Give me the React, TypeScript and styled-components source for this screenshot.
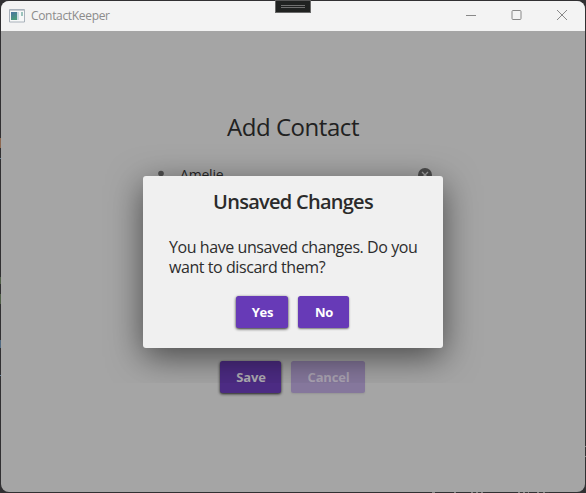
import React from "react";
import styled, { createGlobalStyle } from "styled-components";

const GlobalStyle = createGlobalStyle`
  * { box-sizing: border-box; }
  html, body { margin: 0; height: 100%; background: #3a383b; }
  body { font-family: "Open Sans", "Noto Sans", sans-serif; overflow: hidden; }
`;

const Desktop = styled.div`
  position: relative;
  width: 586px;
  height: 493px;
  padding: 1px;
  background:
    linear-gradient(#b48262, #b48262) 0 138px / 1px 10px no-repeat,
    linear-gradient(#7fa6c6, #7fa6c6) 0 158px / 1px 1px no-repeat,
    linear-gradient(#64785a, #64785a) 0 277px / 1px 7px no-repeat,
    linear-gradient(#64785a, #64785a) 0 294px / 1px 10px no-repeat,
    linear-gradient(#6285a5, #6285a5) 0 340px / 1px 8px no-repeat,
    linear-gradient(#7fa6c6, #7fa6c6) 0 375px / 1px 1px no-repeat,
    linear-gradient(#aaa, #aaa) 585px 446px / 1px 1px no-repeat,
    linear-gradient(#aaa, #aaa) 585px 456px / 1px 1px no-repeat,
    repeating-linear-gradient(90deg, #aaa 0 2px, #444 2px 5px) 471px 492px / 12px 1px no-repeat,
    repeating-linear-gradient(90deg, #aaa 0 2px, #444 2px 5px) 518px 492px / 11px 1px no-repeat,
    repeating-linear-gradient(90deg, #aaa 0 2px, #444 2px 6px) 537px 492px / 12px 1px no-repeat,
    linear-gradient(#aaa, #aaa) 432px 492px / 3px 1px no-repeat,
    linear-gradient(#aaa, #aaa) 454px 492px / 2px 1px no-repeat,
    #3a383b;
`;

const Window = styled.div`
  display: flex;
  flex-direction: column;
  height: 491px;
  width: 584px;
  overflow: hidden;
  border-radius: 8px;
  background: #a5a5a5;
  box-shadow: 0 0 0 4px rgba(24, 22, 25, 0.25);
`;

const TitleBar = styled.header`
  display: flex;
  align-items: center;
  flex: none;
  height: 30px;
  padding-left: 8px;
  background: #f3f3f3;
  color: #8b8b8b;
`;

const AppTitle = styled.span`
  flex: 1;
  margin-left: 6px;
  font-size: 12px;
  line-height: 16px;
  letter-spacing: -0.33px;
`;

const CaptionButton = styled.span`
  display: flex;
  justify-content: center;
  width: 45.5px;
`;

const DebugTab = styled.div`
  position: absolute;
  left: 275px;
  top: 0;
  width: 36px;
  height: 13px;
  display: flex;
  flex-direction: column;
  align-items: center;
  gap: 1px;
  padding-top: 4px;
  border: 1px solid #696969;
  border-top-color: #555;
  background: #202221;
`;

const DebugLine = styled.i`
  width: 24px;
  height: 1px;
  background: #707070;
`;

const Client = styled.main`
  position: relative;
  flex: 1;
  display: flex;
  flex-direction: column;
  align-items: center;
`;

const PageTitle = styled.h1`
  margin: 79px 0 0;
  font-size: 24px;
  line-height: 34px;
  font-weight: 400;
  letter-spacing: -0.45px;
  color: #212121;
`;

const Field = styled.div`
  display: flex;
  align-items: center;
  width: 284px;
  height: 24px;
  margin-top: 19px;
  padding: 0 3px 0 2px;
  font-size: 14px;
  color: #272727;
`;

const FieldValue = styled.span`
  flex: 1;
  margin-left: 11px;
  padding-bottom: 2px;
  letter-spacing: -0.2px;
`;

const Actions = styled.div<{ $top: number }>`
  display: flex;
  gap: 10px;
  margin-top: ${(p) => p.$top}px;
  margin-right: 2px;
`;

const Button = styled.button<{ $width: number; $tone?: "raised" | "dim" | "disabled" }>`
  width: ${(p) => p.$width}px;
  height: 32px;
  padding: 0 0 1px 2px;
  border: 0;
  border-radius: 2.5px;
  font: 700 13px/18px "Open Sans", "Noto Sans", sans-serif;
  letter-spacing: -0.2px;
  color: ${(p) => (p.$tone === "dim" ? "#aeabb2" : p.$tone === "disabled" ? "#aaa3b2" : "#fff")};
  background: ${(p) => (p.$tone === "dim" ? "#4c2b83" : p.$tone === "disabled" ? "#85779c" : "#673ab7")};
  box-shadow: ${(p) =>
    p.$tone === "disabled"
      ? "0 1px 2px rgba(0,0,0,.1)"
      : p.$tone
        ? "0 1px 3px rgba(0,0,0,.85)"
        : "0 1px 2px rgba(0,0,0,.5)"};
`;

const DialogLayer = styled.div`
  position: absolute;
  inset: 0;
  display: flex;
  justify-content: center;
  align-items: flex-start;
  padding-top: 145px;
`;

const Dialog = styled.section`
  display: flex;
  flex-direction: column;
  align-items: center;
  width: 300px;
  height: 172px;
  border-radius: 3px;
  background: #f0f0f0;
  box-shadow: 0 9px 34px rgba(0, 0, 0, 0.56);
  clip-path: inset(-60px -60px -35px -60px);
`;

const DialogTitle = styled.h2`
  margin: 12px 0 0;
  font-size: 20px;
  line-height: 28px;
  font-weight: 600;
  letter-spacing: -0.73px;
  color: #2b2b2b;
`;

const Message = styled.p`
  width: 260px;
  margin: 21px 0 0 12px;
  font-size: 16px;
  line-height: 20px;
  letter-spacing: -0.43px;
  color: #2d2d2d;
  white-space: nowrap;
`;

export default function App() {
  return (
    <Desktop>
      <GlobalStyle />
      <Window>
        <TitleBar>
          <svg width="16" height="14" viewBox="0 0 16 14">
            <defs>
              <linearGradient id="pane" x2=".4" y2="1">
                <stop stopColor="#4974a2" />
                <stop offset="1" stopColor="#4b9a7c" />
              </linearGradient>
            </defs>
            <path d="M.5 .5h15v12.5H.5z" fill="#f7f8f8" stroke="#a9b2bb" />
            <path d="M1 1.5h14" stroke="#c5cbd1" />
            <path d="M2 3h6v8H2z" fill="url(#pane)" />
            <path d="M8 3h2v8H8z" fill="#cbdbe2" />
            <path d="M12 3h2v4h-2z" fill="#9cc4bd" />
          </svg>
          <AppTitle>ContactKeeper</AppTitle>
          <CaptionButton>
            <svg width="12" height="12" fill="none" stroke="#888"><path d="M1 5.5h10" /></svg>
          </CaptionButton>
          <CaptionButton>
            <svg width="12" height="12" fill="none" stroke="#888"><rect x="1" y=".5" width="9" height="9" rx="1" /></svg>
          </CaptionButton>
          <CaptionButton>
            <svg width="12" height="12" fill="none" stroke="#888"><path d="M1 0l10 10M11 0L1 10" /></svg>
          </CaptionButton>
        </TitleBar>
        <Client>
          <PageTitle>Add Contact</PageTitle>
          <Field>
            <svg width="16" height="16" viewBox="0 0 16 16" fill="#505050">
              <circle cx="8" cy="6.5" r="2.8" />
              <path d="M2 16c0-6 12-6 12 0z" />
            </svg>
            <FieldValue>Amelie</FieldValue>
            <svg width="14" height="14" viewBox="0 0 14 14">
              <circle cx="7" cy="7" r="7" fill="#4b4b4b" />
              <path d="M4 4l6 6M10 4l-6 6" stroke="#a0a0a0" strokeWidth="1.4" />
            </svg>
          </Field>
          <Actions $top={174}>
            <Button $width={61} $tone="dim">Save</Button>
            <Button $width={74} $tone="disabled">Cancel</Button>
          </Actions>
          <DialogLayer>
            <Dialog role="dialog">
              <DialogTitle>Unsaved Changes</DialogTitle>
              <Message>
                You have unsaved changes. Do you
                <br />
                want to discard them?
              </Message>
              <Actions $top={19}>
                <Button $width={52} $tone="raised">Yes</Button>
                <Button $width={51}>No</Button>
              </Actions>
            </Dialog>
          </DialogLayer>
        </Client>
      </Window>
      <DebugTab>
        <DebugLine />
        <DebugLine />
      </DebugTab>
    </Desktop>
  );
}
